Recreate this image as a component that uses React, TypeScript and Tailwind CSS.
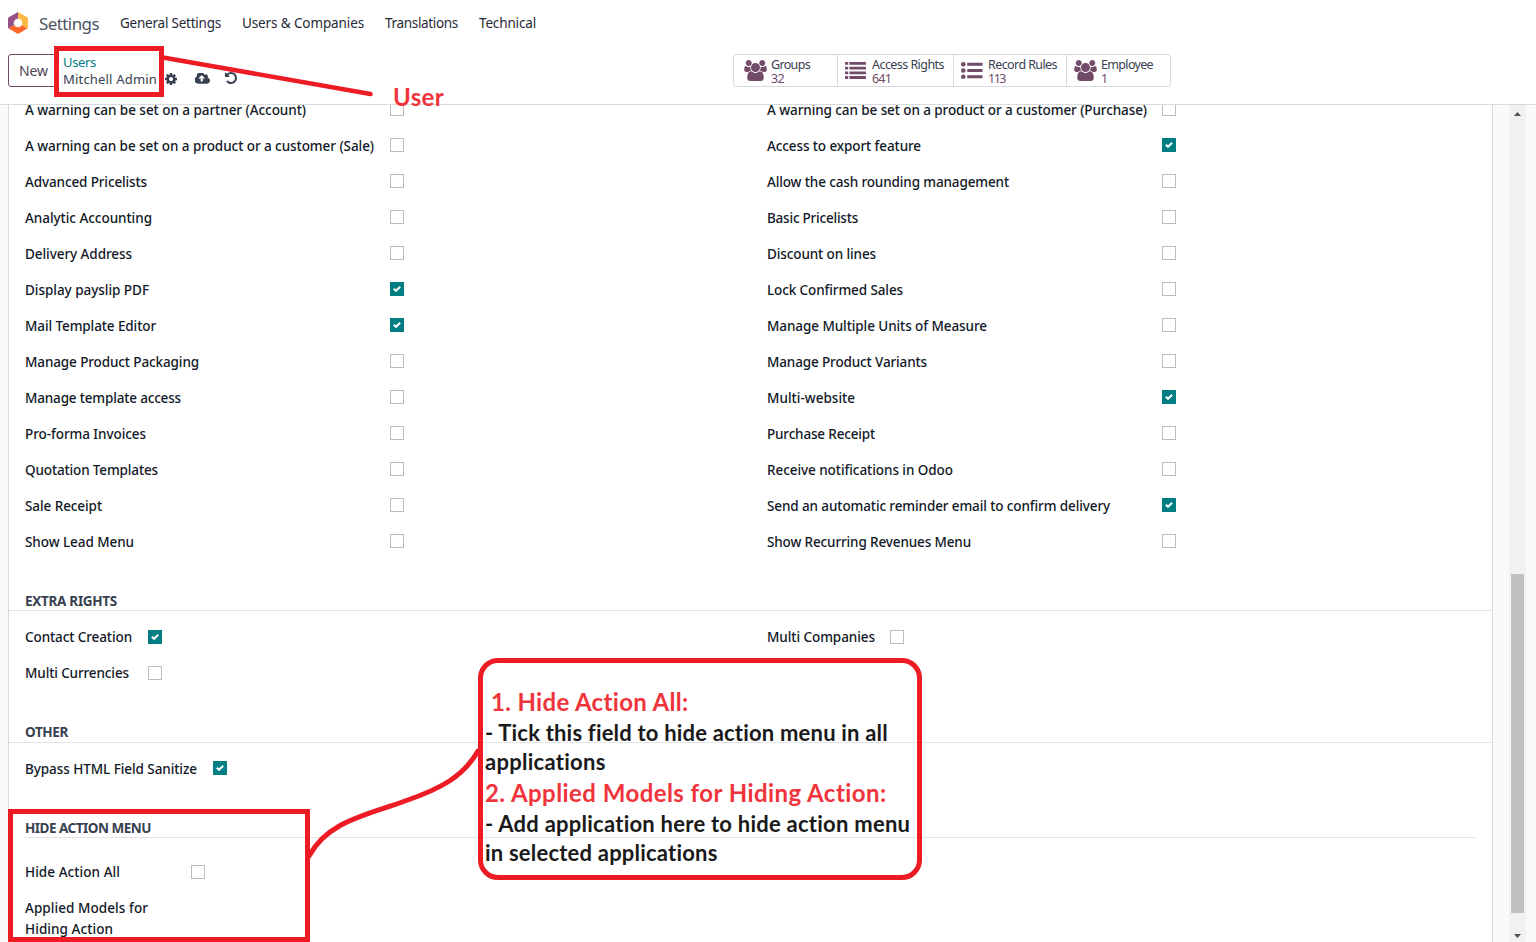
import { useLayoutEffect, useRef, useState, type ReactNode } from "react";

/** Single line of text whose letter spacing is tuned to fill a given measure. */
function Fit({ w, className = "", children }: { w: number; className?: string; children: string }) {
  const ref = useRef<HTMLSpanElement>(null);
  const [spacing, setSpacing] = useState(0);
  useLayoutEffect(() => {
    const el = ref.current;
    if (!el) return;
    el.style.letterSpacing = "0px";
    const natural = el.getBoundingClientRect().width;
    const next = (w - natural) / children.length;
    el.style.letterSpacing = `${next}px`;
    setSpacing(next);
  }, [w, children]);
  return (
    <span ref={ref} className={`inline-block whitespace-pre ${className}`} style={{ letterSpacing: `${spacing}px` }}>
      {children}
    </span>
  );
}

function Check({ on = false }: { on?: boolean }) {
  return on ? (
    <span className="flex size-3.5 shrink-0 items-center justify-center bg-[#017e84]">
      <svg viewBox="0 0 14 14" className="size-3.5" fill="none" stroke="#fff" strokeWidth="2">
        <path d="M3.800 6.800 6 8.800 10.200 4.800" />
      </svg>
    </span>
  ) : (
    <span className="block size-3.5 shrink-0 border border-[#b9bcc1] bg-white" />
  );
}

type Item = [string, number, boolean?];

const leftItems: Item[] = [
  ["A warning can be set on a partner (Account)", 281],
  ["A warning can be set on a product or a customer (Sale)", 349],
  ["Advanced Pricelists", 122],
  ["Analytic Accounting", 127],
  ["Delivery Address", 107],
  ["Display payslip PDF", 124, true],
  ["Mail Template Editor", 131, true],
  ["Manage Product Packaging", 174],
  ["Manage template access", 156],
  ["Pro-forma Invoices", 121],
  ["Quotation Templates", 133],
  ["Sale Receipt", 77],
  ["Show Lead Menu", 109],
];

const rightItems: Item[] = [
  ["A warning can be set on a product or a customer (Purchase)", 380],
  ["Access to export feature", 154, true],
  ["Allow the cash rounding management", 242],
  ["Basic Pricelists", 91],
  ["Discount on lines", 109],
  ["Lock Confirmed Sales", 136],
  ["Manage Multiple Units of Measure", 220],
  ["Manage Product Variants", 160],
  ["Multi-website", 88, true],
  ["Purchase Receipt", 108],
  ["Receive notifications in Odoo", 186],
  ["Send an automatic reminder email to confirm delivery", 343, true],
  ["Show Recurring Revenues Menu", 204],
];

function Row({ item, labelClass, boxClass = "pb-0.5" }: { item: Item; labelClass: string; boxClass?: string }) {
  return (
    <div className="flex h-9 items-center">
      <div className={`shrink-0 ${labelClass}`}>
        <Fit w={item[1]}>{item[0]}</Fit>
      </div>
      <div className={boxClass}>
        <Check on={item[2]} />
      </div>
    </div>
  );
}

function Heading({ w, className = "", children }: { w: number; className?: string; children: string }) {
  return (
    <div className={`flex items-end border-b border-[#e2e4e7] text-[13.5px] leading-[18px] font-bold text-[#374151] ${className}`}>
      <Fit w={w}>{children}</Fit>
    </div>
  );
}

function GroupIcon() {
  return (
    <svg viewBox="0 0 1920 1792" className="h-[21px] w-[23px]" fill="#714b67">
      <path d="M593 896q-162 5-265 128h-134q-82 0-138-40.500t-56-118.500q0-353 124-353 6 0 43.500 21t97.500 42.500 119 21.500q67 0 133-23-5 37-5 66 0 139 81 256zM1664 1533q0 120-73 189.500t-194 69.500h-874q-121 0-194-69.500t-73-189.500q0-53 3.500-103.500t14-109 26.500-108.500 43-97.500 62-81 85.500-53.500 111.500-20q10 0 43 21.500t73 48 107 48 135 21.500 135-21.500 107-48 73-48 43-21.500q61 0 111.500 20t85.500 53.500 62 81 43 97.500 26.500 108.500 14 109 3.500 103.500zM640 256q0 106-75 181t-181 75-181-75-75-181 75-181 181-75 181 75 75 181zM1344 640q0 159-112.500 271.500t-271.500 112.500-271.500-112.500-112.500-271.500 112.500-271.500 271.500-112.500 271.500 112.500 112.500 271.500zM1920 865q0 78-56 118.500t-138 40.500h-134q-103-123-265-128 81-117 81-256 0-29-5-66 66 23 133 23 59 0 119-21.500t97.500-42.500 43.500-21q124 0 124 353zM1792 256q0 106-75 181t-181 75-181-75-75-181 75-181 181-75 181 75 75 181z" />
    </svg>
  );
}

function ListIcon() {
  return (
    <svg viewBox="0 0 21 17" className="h-[17px] w-[21px]" fill="#714b67">
      {[0, 4.7, 9.4, 14.1].map((y) => (
        <g key={y}>
          <rect x="0" y={y} width="3.2" height="2.8" rx=".4" />
          <rect x="4.4" y={y} width="16.6" height="2.8" rx=".4" />
        </g>
      ))}
    </svg>
  );
}

function ListUlIcon() {
  return (
    <svg viewBox="0 0 22 17" className="h-[17px] w-[22px]" fill="#714b67">
      {[2.3, 8.5, 14.7].map((y) => (
        <g key={y}>
          <circle cx="2.3" cy={y} r="2.3" />
          <rect x="6.2" y={y - 1.5} width="15.3" height="3" rx=".4" />
        </g>
      ))}
    </svg>
  );
}

function Stat({ icon, label, w, value, vw, className }: { icon: ReactNode; label: string; w: number; value: string; vw: number; className: string }) {
  return (
    <div className={`flex h-full items-center border-[#d8dadd] ${className}`}>
      <div className="flex w-[27px] shrink-0 items-center">{icon}</div>
      <div className="flex flex-col pt-0.5 text-[12.5px] leading-[13.5px]">
        <Fit w={w} className="text-[#374151]">{label}</Fit>
        <Fit w={vw} className="self-start text-[#714b67]">{value}</Fit>
      </div>
    </div>
  );
}

export default function App() {
  return (
    <div className="relative flex h-[942px] w-[1536px] flex-col overflow-hidden bg-white font-['Noto_Sans','Open_Sans',sans-serif] text-[13.5px] text-[#111827]">
      <header className="flex h-[104px] shrink-0 flex-col">
        <nav className="flex h-[46px] items-center pl-2 text-[13.5px] text-[#1f2937]">
          <svg viewBox="0 0 20 22" className="h-[22px] w-5">
            <path d="M10 0 .8 5.2Q0 5.7 0 6.600V15.500Q0 16.200.7 16.600L10 11Z" fill="#985184" />
            <path d="M10 0 19.200 5.200Q20 5.700 20 6.600V15.500Q20 16.200 19.300 16.600L10 11Z" fill="#fbb945" />
            <path d="M.7 16.600 9.200 21.600Q10 22 10.800 21.600L19.300 16.600 10 11Z" fill="#fc6626" />
            <circle cx="10" cy="11" r="4.300" fill="#fff" />
          </svg>
          <Fit w={60} className="mt-0.5 ml-[11px] text-[17px] text-[#4b5563]">Settings</Fit>
          <Fit w={101} className="ml-[21px]">General Settings</Fit>
          <Fit w={122} className="ml-[21px]">Users &amp; Companies</Fit>
          <Fit w={73} className="ml-[21px]">Translations</Fit>
          <Fit w={57} className="ml-[21px]">Technical</Fit>
        </nav>
        <div className="flex h-[58px] items-start pl-2">
          <button className="mt-2 flex h-[33px] w-[50px] shrink-0 items-center rounded-[3px] border border-[#714b67] pl-2.5 text-sm text-[#4f4356]">
            <Fit w={29}>New</Fit>
          </button>
          <div className="mt-2 ml-[5px] flex w-[102px] shrink-0 flex-col items-start text-[13px] leading-[17px]">
            <Fit w={33} className="text-[#017e84]">Users</Fit>
            <Fit w={94} className="text-[#374151]">Mitchell Admin</Fit>
          </div>
          <div className="mt-[27px] flex shrink-0 items-center text-[#374151]">
            <svg viewBox="0 128 1536 1536" className="size-3" fill="currentColor">
              <path d="M1024 896q0-106-75-181t-181-75-181 75-75 181 75 181 181 75 181-75 75-181zm512-109v222q0 12-8 23t-20 13l-185 28q-19 54-39 91 35 50 107 138 10 12 10 25t-9 23q-27 37-99 108t-94 71q-12 0-26-9l-138-108q-44 23-91 38-16 136-29 186-7 28-36 28h-222q-14 0-24.500-8.500t-11.500-21.500l-28-184q-49-16-90-37l-141 107q-10 9-25 9-14 0-25-11-126-114-165-168-7-10-7-23 0-12 8-23 15-21 51-66.500t54-70.500q-27-50-41-99l-183-27q-13-2-21-12.500t-8-23.500v-222q0-12 8-23t19-13l186-28q14-46 39-92-40-57-107-138-10-12-10-24 0-10 9-23 26-36 98.500-107.500t94.500-71.500q13 0 26 10l138 107q44-23 91-38 16-136 29-186 7-28 36-28h222q14 0 24.500 8.500t11.500 21.500l28 184q49 16 90 37l142-107q9-9 24-9 13 0 25 10 129 119 165 170 7 8 7 22 0 12-8 23-15 21-51 66.500t-54 70.500q26 50 41 98l183 28q13 2 21 12.500t8 23.500z" />
            </svg>
            <svg viewBox="0 256 1856 1280" className="-mt-0.5 ml-[18px] h-[11px] w-[15px]" fill="currentColor">
              <path d="M1216 864q0-14-9-23l-352-352q-9-9-23-9t-23 9l-351 351q-10 12-10 24 0 14 9 23t23 9h224v352q0 13 9.500 22.500t22.500 9.500h192q13 0 22.500-9.500t9.500-22.500v-352h224q13 0 22.500-9.500t9.500-22.500zm640 288q0 159-112.500 271.500t-271.500 112.500h-1088q-185 0-316.500-131.500t-131.500-316.500q0-130 70-240t188-165q-2-30-2-43 0-212 150-362t362-150q156 0 285.500 87t188.500 231q71-62 166-62 106 0 181 75t75 181q0 76-41 138 130 31 213.500 135.500t83.500 238.500z" />
            </svg>
            <svg viewBox="0 128 1536 1536" className="-mt-0.5 ml-[15px] size-3" fill="currentColor">
              <path d="M1536 896q0 156-61 298t-164 245-245 164-298 61q-172 0-327-72.500t-264-204.500q-7-10-6.500-22.500t8.500-20.500l137-138q10-9 25-9 16 2 23 12 73 95 179 147t225 52q104 0 198.500-40.500t163.500-109.500 109.500-163.500 40.500-198.500-40.500-198.500-109.500-163.500-163.500-109.500-198.500-40.500q-98 0-188 35.500t-160 101.500l137 138q31 30 14 69-17 40-59 40h-448q-26 0-45-19t-19-45v-448q0-42 40-59 39-17 69 14l130 129q107-101 244.500-156.500t284.500-55.500q156 0 298 61t245 164 164 245 61 298z" />
            </svg>
          </div>
          <div className="mt-2 ml-[496px] flex h-[33px] w-[438px] rounded-[3px] border border-[#d8dadd]">
            <Stat icon={<GroupIcon />} label="Groups" w={39} value="32" vw={13} className="w-[104px] border-r pl-2.5" />
            <Stat icon={<ListIcon />} label="Access Rights" w={72} value="641" vw={19} className="w-[116px] border-r pl-[7px]" />
            <Stat icon={<ListUlIcon />} label="Record Rules" w={69} value="113" vw={17} className="w-[113px] border-r pl-[7px]" />
            <Stat icon={<GroupIcon />} label="Employee" w={52} value="1" vw={6} className="w-[103px] pl-[7px]" />
          </div>
        </div>
      </header>

      <main className="flex min-h-0 flex-1 border-t border-[#d8dadd] bg-[#f9fafb] pl-2">
        <div className="w-[1485px] shrink-0 overflow-hidden border-x border-[#d8dadd] bg-white font-medium">
          <div className="-mt-[13px] flex pl-4">
            <div className="w-[742px]">
              {leftItems.map((it) => (
                <Row key={it[0]} item={it} labelClass="w-[365px]" />
              ))}
            </div>
            <div>
              {rightItems.map((it) => (
                <Row key={it[0]} item={it} labelClass="w-[395px]" />
              ))}
            </div>
          </div>

          <Heading w={92} className="h-[51px] pl-4">EXTRA RIGHTS</Heading>
          <div className="flex pt-2 pl-4">
            <div className="w-[742px]">
              <Row item={["Contact Creation", 107, true]} labelClass="w-[123px]" boxClass="" />
              <Row item={["Multi Currencies", 104]} labelClass="w-[123px]" boxClass="" />
            </div>
            <Row item={["Multi Companies", 108]} labelClass="w-[123px]" boxClass="" />
          </div>

          <Heading w={43} className="h-[52px] pb-px pl-4">OTHER</Heading>
          <div className="pt-2 pl-4">
            <Row item={["Bypass HTML Field Sanitize", 172, true]} labelClass="w-[188px]" />
          </div>

          <Heading w={126} className="mx-4 h-[51px]">HIDE ACTION MENU</Heading>
          <div className="pt-4 pl-4">
            <Row item={["Hide Action All", 95]} labelClass="w-[166px]" boxClass="" />
            <div className="mt-2 flex flex-col items-start leading-[21px]">
              <Fit w={123}>Applied Models for</Fit>
              <Fit w={88}>Hiding Action</Fit>
            </div>
          </div>
        </div>

        <div className="ml-4 flex w-[17px] flex-col items-center bg-[#f1f1f1]">
          <svg viewBox="0 0 7 4" className="mt-[7px] h-1 w-[7px]" fill="#505050">
            <path d="M3.500 0 7 4H0Z" />
          </svg>
          <div className="mt-[458px] h-[339px] w-[13px] bg-[#c1c1c1]" />
          <svg viewBox="0 0 7 4" className="mt-[21px] h-1 w-[7px]" fill="#505050">
            <path d="M0 0H7L3.500 4Z" />
          </svg>
        </div>
      </main>

      <div className="absolute top-[46px] left-[54px] h-[51px] w-[110px] border-[5px] border-[#ed1c24]" />
      <div className="absolute top-[809px] left-2 h-[133px] w-[302px] border-[5px] border-[#ed1c24]" />
      <svg className="absolute inset-0 size-full" fill="none" stroke="#ed1c24" strokeWidth="5" strokeLinecap="round">
        <path d="M163 57.500 370.500 94" strokeWidth="4.500" />
        <path d="M309 856C328 821 367 815 405 801C440 789 463 777 478 751" />
      </svg>
      <div className="absolute top-[83px] left-[393px] font-['Lato',sans-serif] text-2xl leading-7 font-bold text-[#f0343c]">
        <Fit w={51}>User</Fit>
      </div>
      <div className="absolute top-[658px] left-[478px] flex h-[222px] w-[444px] flex-col items-start rounded-[20px] border-[5px] border-[#ed1c24] pt-[23px] pl-0.5 font-['Lato',sans-serif] text-[22px] leading-[29px] font-bold text-[#1a1a1a]">
        <Fit w={198} className="ml-1.5 text-2xl leading-8 text-[#f0343c]">1. Hide Action All:</Fit>
        <Fit w={403}>- Tick this field to hide action menu in all</Fit>
        <Fit w={121}>applications</Fit>
        <Fit w={402} className="mt-px text-2xl leading-8 text-[#f0343c]">2. Applied Models for Hiding Action:</Fit>
        <Fit w={426}>- Add application here to hide action menu</Fit>
        <Fit w={233}>in selected applications</Fit>
      </div>
    </div>
  );
}
